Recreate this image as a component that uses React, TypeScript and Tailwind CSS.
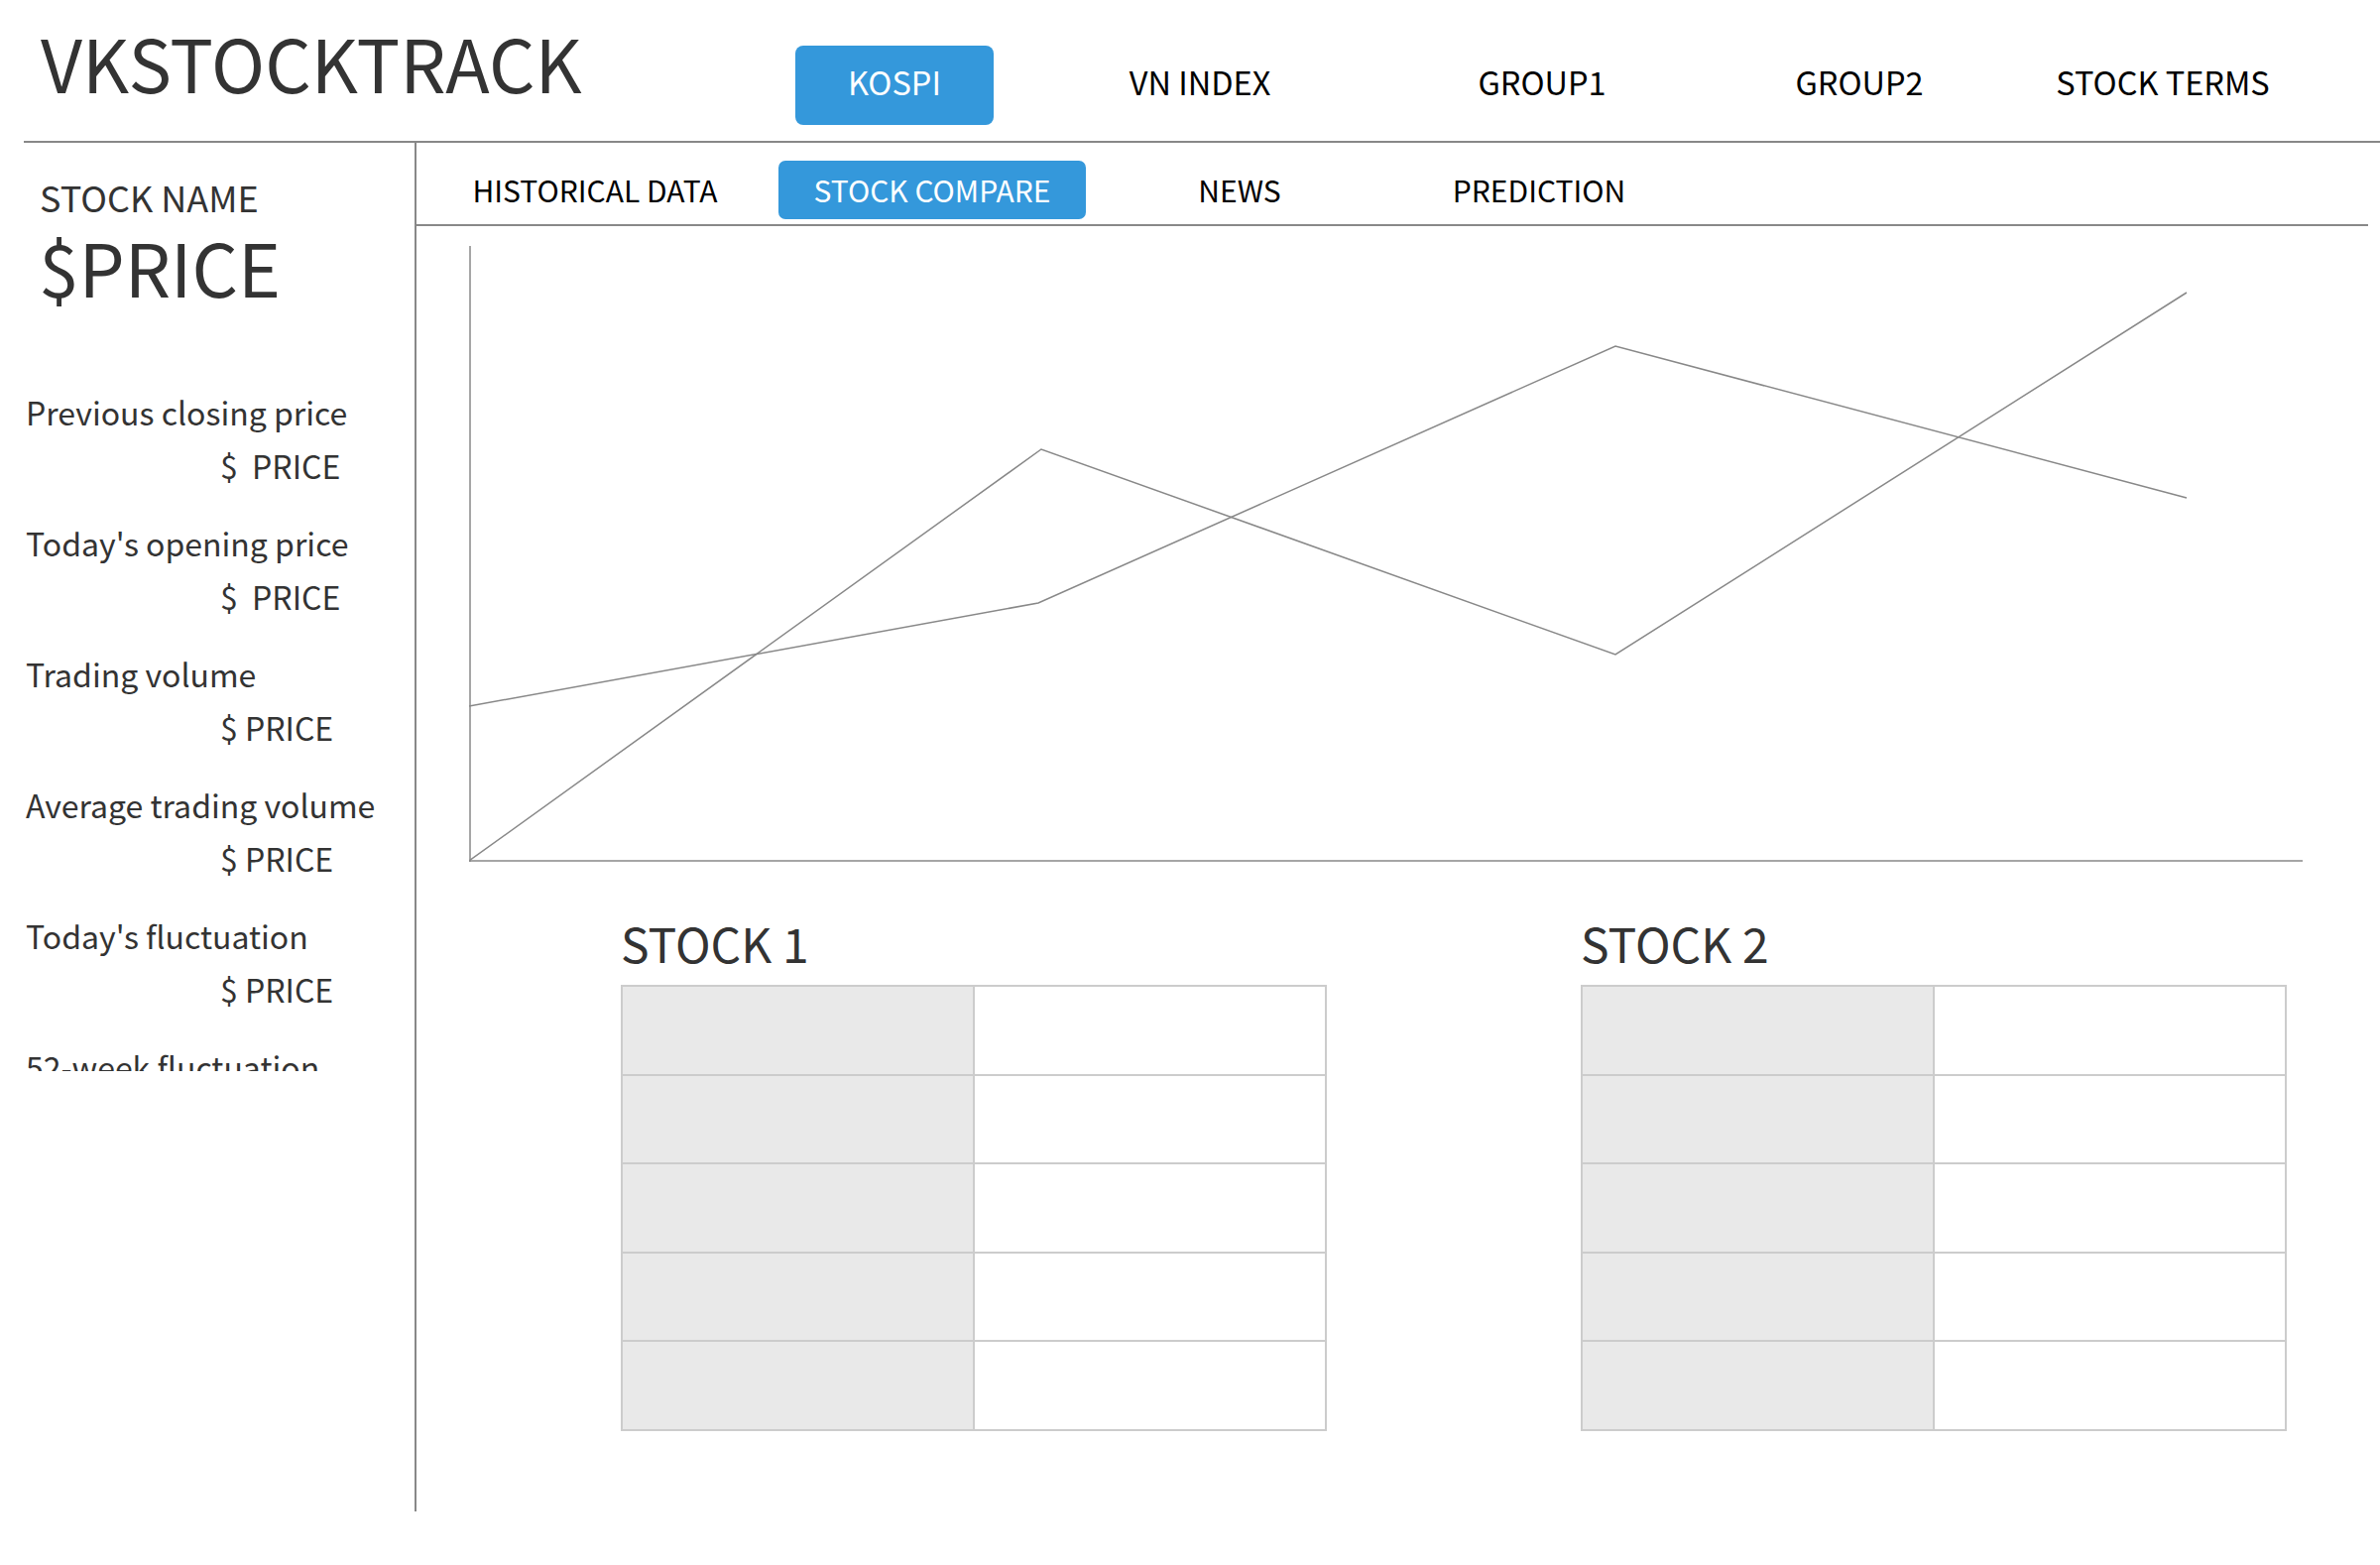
import React from "react";

const FONT = { fontFamily: '"Noto Sans CJK KR", "Open Sans", sans-serif' };

const topNav = [
    { label: "KOSPI", active: true, w: "w-[200px]", ml: "ml-0" },
    { label: "VN INDEX", active: false, w: "w-[200px]", ml: "ml-[108px]" },
    { label: "GROUP1", active: false, w: "w-[200px]", ml: "ml-[145px]" },
    { label: "GROUP2", active: false, w: "w-[200px]", ml: "ml-[120px]" },
    { label: "STOCK TERMS", active: false, w: "w-[260px]", ml: "ml-[76px]" },
];

const tabs = [
    { label: "HISTORICAL DATA", active: false, w: "w-[310px]", ml: "ml-[25px]" },
    { label: "STOCK COMPARE", active: true, w: "w-[310px]", ml: "ml-[30px]" },
    { label: "NEWS", active: false, w: "w-[200px]", ml: "ml-[55px]" },
    { label: "PREDICTION", active: false, w: "w-[260px]", ml: "ml-[72px]" },
];

const stats = [
    { label: "Previous closing price", value: "$  PRICE" },
    { label: "Today's opening price", value: "$  PRICE" },
    { label: "Trading volume", value: "$ PRICE" },
    { label: "Average trading volume", value: "$ PRICE" },
    { label: "Today's fluctuation", value: "$ PRICE" },
    { label: "52-week fluctuation", value: "$ PRICE" },
];

// Empty comparison table, grey key column + white value column
const CompareTable = ({ title }: { title: string }) => (
    <div className="w-[712px]">
        <h2 className="text-[48px] leading-[56px] text-[#333]">{title}</h2>
        <table className="mt-[15px] w-[712px] border-collapse">
            <tbody>
                {[0, 1, 2, 3, 4].map((i) => (
                    <tr key={i} className="h-[89.6px]">
                        <td className="w-1/2 border-2 border-[#cccccc] bg-[#e9e9e9]"></td>
                        <td className="w-1/2 border-2 border-[#cccccc] bg-white"></td>
                    </tr>
                ))}
            </tbody>
        </table>
    </div>
);

const Chart = () => (
    <svg width="1850" height="622" viewBox="0 0 1850 622" className="block">
        <line x1="1" y1="0" x2="1" y2="621" stroke="#888" strokeWidth="1.5" />
        <line x1="0" y1="620" x2="1849" y2="620" stroke="#888" strokeWidth="1.5" />
        <polyline points="0,464 574,360 1156,101 1732,254" fill="none" stroke="#888" strokeWidth="1.5" />
        <polyline points="0,620 577,205 1156,412 1732,47" fill="none" stroke="#888" strokeWidth="1.5" />
    </svg>
);

export default function App() {
    return (
        <div className="w-[2400px] h-[1578px] bg-white overflow-hidden" style={FONT}>
            {/* Header */}
            <header className="ml-[24px] h-[144px] border-b-2 border-[#888] flex items-start">
                <h1 className="ml-[17px] mt-[18px] w-[545px] shrink-0 text-[73px] leading-[88px] text-[#333] whitespace-nowrap">
                    VKSTOCKTRACK
                </h1>
                <nav className="ml-[216px] mt-[46px] flex items-center">
                    {topNav.map((n) => (
                        <a
                            key={n.label}
                            className={`${n.ml} ${n.w} h-[80px] pb-[7px] rounded-[8px] flex items-center justify-center text-[32.5px] whitespace-nowrap ${
                                n.active ? "bg-[#3498db] text-white" : "text-black"
                            }`}
                        >
                            {n.label}
                        </a>
                    ))}
                </nav>
            </header>

            <div className="ml-[24px] flex">
                {/* Sidebar */}
                <aside className="w-[396px] h-[1380px] border-r-2 border-[#888] shrink-0">
                    <div className="ml-[16px] mt-[30px] text-[36px] leading-[48px] text-[#333]">STOCK NAME</div>
                    <div className="ml-[15px] mt-[6px] text-[73px] leading-[80px] text-[#333]">$PRICE</div>
                    <div className="mt-[81px] h-[691px] overflow-hidden text-[32px] text-[#333]">
                        {stats.map((s) => (
                            <div key={s.label} className="h-[132px]">
                                <div className="ml-[2px] leading-[52px] whitespace-nowrap">{s.label}</div>
                                <div className="ml-[198px] leading-[56px] whitespace-pre">{s.value}</div>
                            </div>
                        ))}
                    </div>
                </aside>

                {/* Main content */}
                <main className="w-[1968px]">
                    <div className="h-[84px] border-b-2 border-[#888] flex items-start pt-[18px]">
                        {tabs.map((t) => (
                            <a
                                key={t.label}
                                className={`${t.ml} ${t.w} h-[59px] rounded-[7px] flex items-center justify-center text-[30px] whitespace-nowrap ${
                                    t.active ? "bg-[#3498db] text-white" : "text-black"
                                }`}
                            >
                                {t.label}
                            </a>
                        ))}
                    </div>

                    <div className="ml-[53px] mt-[20px]">
                        <Chart />
                    </div>

                    <div className="mt-[52px] ml-[206px] flex gap-[256px]">
                        <CompareTable title="STOCK 1" />
                        <CompareTable title="STOCK 2" />
                    </div>
                </main>
            </div>
        </div>
    );
}
